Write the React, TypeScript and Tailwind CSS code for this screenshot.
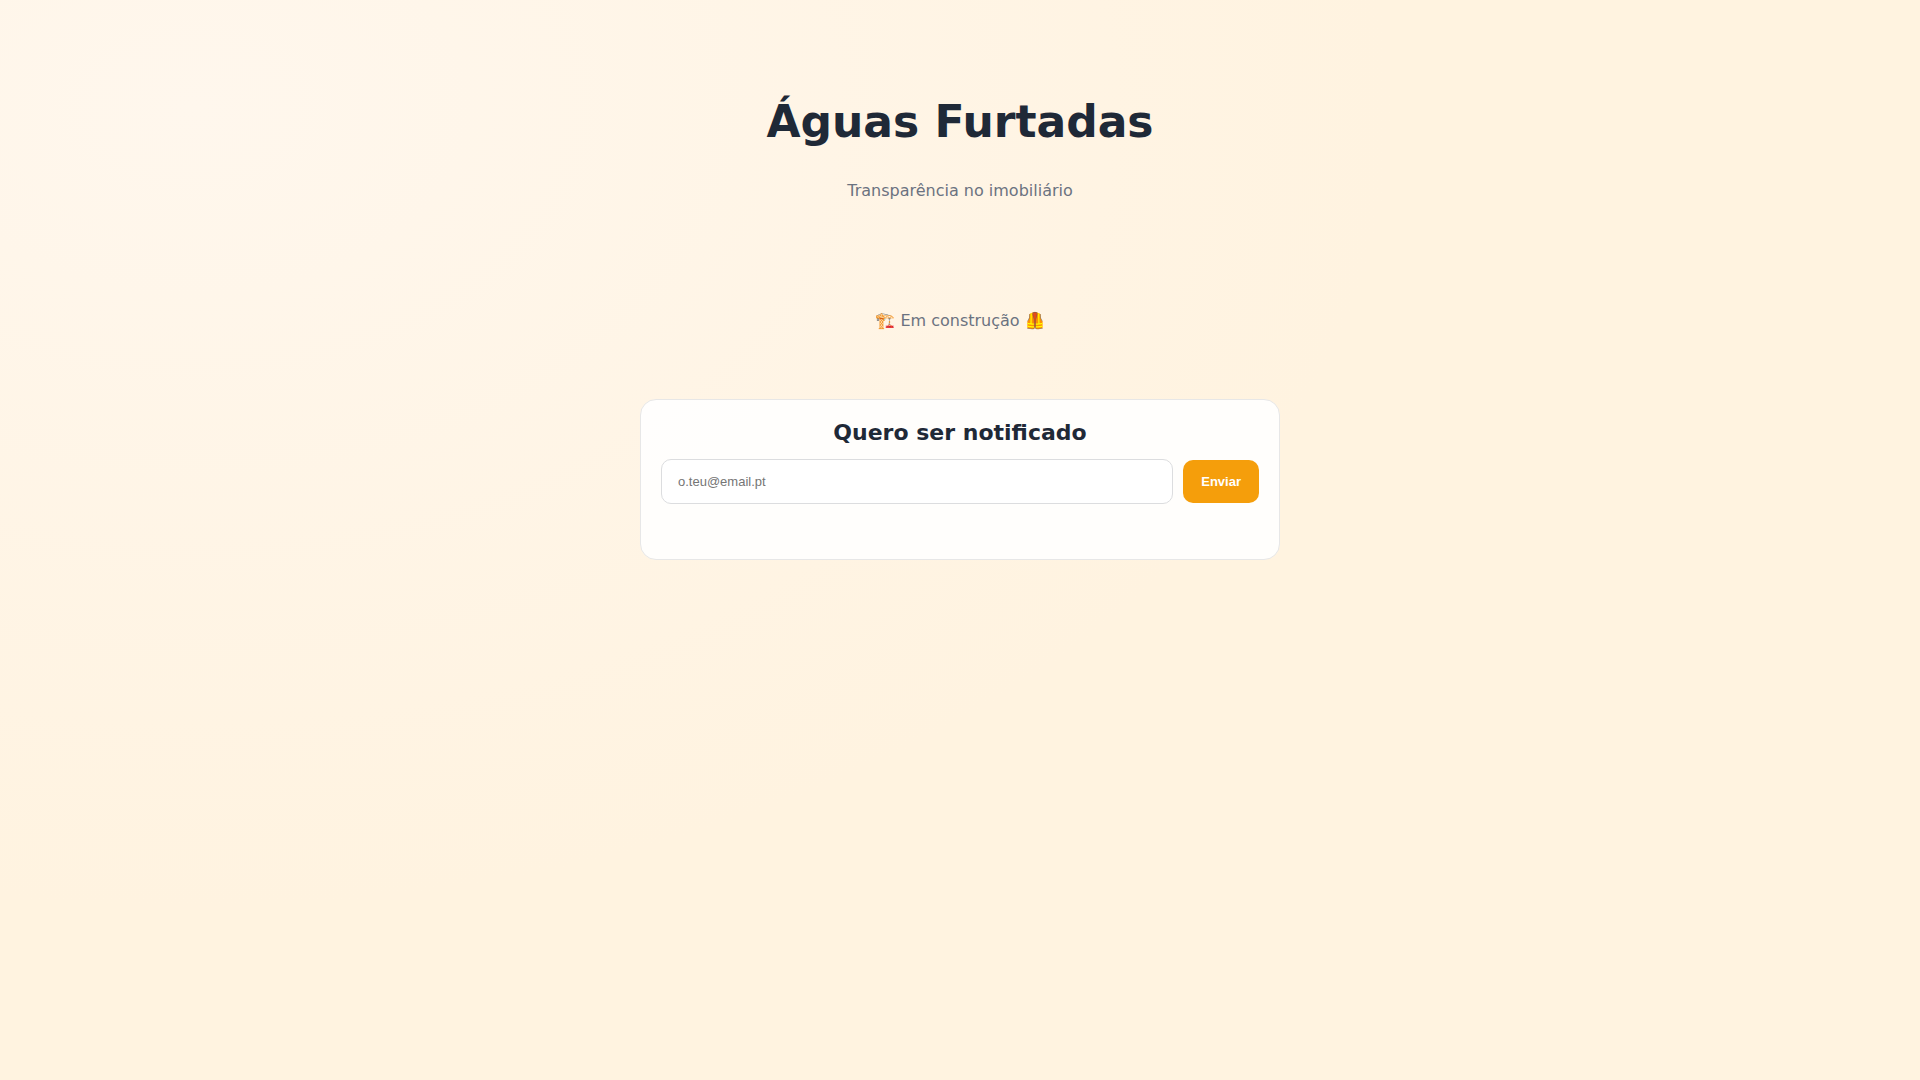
import type React from "react"

const App: React.FC = () => {
  return (
    <div className="min-h-screen px-4 py-20 text-center font-['DejaVu_Sans',sans-serif] text-base text-[#6b7280] bg-[#fff2df] bg-[radial-gradient(1200px_800px_at_10%_10%,#fff7ed,#fff3e0)]">
      <main className="mx-auto max-w-[640px]">
        <header>
          <h1 className="pt-0.5 text-[44px] leading-[80px] font-bold text-[#1f2937]">Águas Furtadas</h1>
          <p className="mt-[17px] leading-6">Transparência no imobiliário</p>
        </header>

        <p className="mt-[106px] leading-6">🏗️ Em construção 🦺</p>

        <section className="mt-[66px] rounded-2xl border border-[#e7e7e7] bg-white/90 p-5 pb-[55px]">
          <h2 className="mb-[14px] text-[22px] leading-[25px] font-bold text-[#1f2937]">Quero ser notificado</h2>
          <form className="flex items-center gap-[10px]" onSubmit={(e) => e.preventDefault()}>
            <input
              type="email"
              aria-label="Email"
              placeholder="o.teu@email.pt"
              className="min-w-0 flex-1 rounded-[10px] border border-[#dcdddf] bg-white px-4 py-[14px] font-['Liberation_Sans',sans-serif] text-[13px] leading-[15px] text-[#1f2937] placeholder:text-[#757575]"
            />
            <button
              type="submit"
              className="rounded-[10px] bg-[#f59e0b] px-[18px] py-[14px] font-['Liberation_Sans',sans-serif] text-[13px] leading-[15px] font-bold text-white"
            >
              Enviar
            </button>
          </form>
        </section>
      </main>
    </div>
  )
}

export default App
